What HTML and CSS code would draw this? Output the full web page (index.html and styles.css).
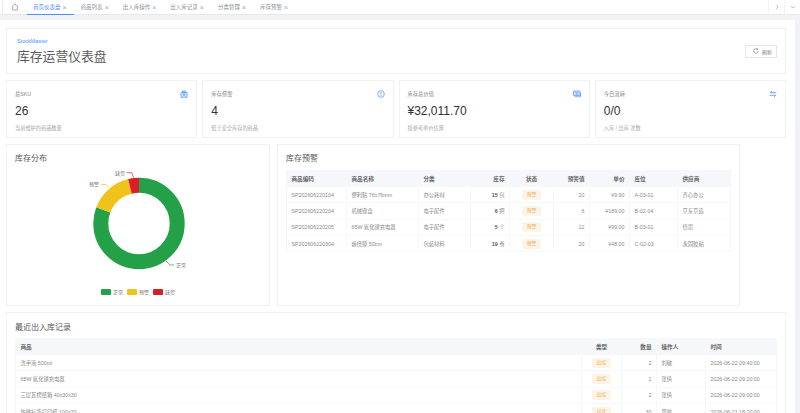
FILE: index.html
```html
<!DOCTYPE html>
<html>
<head>
    <title>库存运营仪表盘</title>
    <meta charset="UTF-8">
    <link rel="stylesheet" href="styles.css">
</head>
<body>
    <div class="tabbar">
        <div class="tab-edge"></div>
        <div class="tab-home">
            <svg width="8" height="8" viewBox="0 0 16 16" fill="none" stroke="#8a8f99" stroke-width="1.4"><path d="M1.500 8 8 2l6.500 6M3.500 7v7h9V7"/></svg>
        </div>
        <div class="tab active">首页仪表盘 <span class="tab-close">×</span></div>
        <div class="tab">商品列表 <span class="tab-close">×</span></div>
        <div class="tab">出入库操作 <span class="tab-close">×</span></div>
        <div class="tab">出入库记录 <span class="tab-close">×</span></div>
        <div class="tab">分类管理 <span class="tab-close">×</span></div>
        <div class="tab">库存预警 <span class="tab-close">×</span></div>
        <div class="tab-tools">
            <div class="tab-tool"><svg width="6" height="6" viewBox="0 0 8 8" fill="none" stroke="#a8acb3"><path d="m2.500 1 3 3-3 3"/></svg></div>
            <div class="tab-tool"><svg width="6" height="6" viewBox="0 0 8 8" fill="none" stroke="#a8acb3"><path d="m1 2.500 3 3 3-3"/></svg></div>
        </div>
    </div>

    <div class="page">
        <div class="content">
            <div class="card hero">
                <div>
                    <div class="brand">StockMaster</div>
                    <h1>库存运营仪表盘</h1>
                </div>
                <button class="refresh-btn">
                    <svg width="6" height="6" viewBox="0 0 12 12" fill="none" stroke="#666" stroke-width="1.2"><path d="M10.500 6A4.500 4.500 0 1 1 9 2.600M9.500 .8v2.400H7"/></svg>
                    刷新
                </button>
            </div>

            <div class="stats">
                <div class="card stat">
                    <div class="stat-head">
                        <span>总SKU</span>
                        <svg class="stat-icon" viewBox="0 0 16 16" fill="none" stroke="#4d8dff" stroke-width="1.500"><path d="M2 5h12v9.500H2zM5 5V2h6v3" fill="#dbe8ff"/><path d="M5.500 8.500 8 11l2.500-2.500M8 5v6" stroke-width="1.600"/></svg>
                    </div>
                    <div class="stat-value">26</div>
                    <div class="stat-note">当前维护的商品数量</div>
                </div>
                <div class="card stat">
                    <div class="stat-head">
                        <span>库存预警</span>
                        <svg class="stat-icon" viewBox="0 0 16 16" fill="none" stroke="#4d8dff" stroke-width="1.400"><circle cx="8" cy="8" r="6.600"/><path d="M8 4v5M8 10.500v1.600" stroke-width="1.600"/></svg>
                    </div>
                    <div class="stat-value">4</div>
                    <div class="stat-note">低于安全库存的商品</div>
                </div>
                <div class="card stat">
                    <div class="stat-head">
                        <span>库存总价值</span>
                        <svg class="stat-icon" viewBox="0 0 16 16" fill="none" stroke="#4d8dff" stroke-width="1.400"><rect x="1" y="2" width="13" height="9" rx="1" fill="#cfe0ff"/><path d="M5 4.500 7.500 7 10 4.500M7.500 7v2.500M3 13.500h12V5"/></svg>
                    </div>
                    <div class="stat-value">¥32,011.70</div>
                    <div class="stat-note">按参考单价估算</div>
                </div>
                <div class="card stat">
                    <div class="stat-head">
                        <span>今日流转</span>
                        <svg class="stat-icon" viewBox="0 0 16 16" fill="none" stroke="#4d8dff" stroke-width="1.600"><path d="M14.500 5.500h-12L6 2M1.500 10.500h12L10 14"/></svg>
                    </div>
                    <div class="stat-value">0/0</div>
                    <div class="stat-note">入库 / 出库 次数</div>
                </div>
            </div>

            <div class="middle">
                <div class="card panel chart-panel">
                    <h2>库存分布</h2>
                    <svg class="donut" width="262" height="118" viewBox="0 0 262 118">
                        <g fill="none" stroke-width="15" transform="rotate(-90 132 57.500)">
                            <circle cx="132" cy="57.500" r="38.200" stroke="#24a148" pathLength="360" stroke-dasharray="290.800 360"/>
                            <circle cx="132" cy="57.500" r="38.200" stroke="#f1c21b" pathLength="360" stroke-dasharray="55.400 360" stroke-dashoffset="-290.800"/>
                            <circle cx="132" cy="57.500" r="38.200" stroke="#da1e28" pathLength="360" stroke-dasharray="13.800 360" stroke-dashoffset="-346.200"/>
                        </g>
                        <g fill="none" stroke-width=".7">
                            <path d="M159 95l4 4h4" stroke="#24a148"/>
                            <path d="M94 18.500h5l2 3" stroke="#f1c21b"/>
                            <path d="M119.700 6.700h5l2 5" stroke="#da1e28"/>
                        </g>
                        <g class="donut-label">
                            <text x="169" y="101.300">正常</text>
                            <text x="82" y="20.300">预警</text>
                            <text x="108" y="8.700">缺货</text>
                        </g>
                    </svg>
                    <div class="legend">
                        <span class="legend-item"><i class="swatch green"></i>正常</span>
                        <span class="legend-item"><i class="swatch yellow"></i>预警</span>
                        <span class="legend-item"><i class="swatch red"></i>缺货</span>
                    </div>
                </div>

                <div class="card panel warn-panel">
                    <h2>库存预警</h2>
                    <table class="warn-table">
                        <thead>
                            <tr>
                                <th class="w-code">商品编码</th>
                                <th class="w-name">商品名称</th>
                                <th class="w-cat">分类</th>
                                <th class="w-stock num">库存</th>
                                <th class="w-state mid">状态</th>
                                <th class="w-limit num">预警值</th>
                                <th class="w-price num">单价</th>
                                <th class="w-loc">库位</th>
                                <th>供应商</th>
                            </tr>
                        </thead>
                        <tbody>
                            <tr>
                                <td>SP202606220104</td><td>便利贴 76x76mm</td><td>办公耗材</td>
                                <td class="num"><b>15</b> 包</td><td class="mid"><span class="tag">预警</span></td>
                                <td class="num">20</td><td class="num">¥9.90</td><td>A-03-01</td><td>齐心办公</td>
                            </tr>
                            <tr>
                                <td>SP202606220204</td><td>机械键盘</td><td>电子配件</td>
                                <td class="num"><b>6</b> 把</td><td class="mid"><span class="tag">预警</span></td>
                                <td class="num">6</td><td class="num">¥189.00</td><td>B-02-04</td><td>京东京造</td>
                            </tr>
                            <tr>
                                <td>SP202606220205</td><td>65W 氮化镓充电器</td><td>电子配件</td>
                                <td class="num"><b>5</b> 个</td><td class="mid"><span class="tag">预警</span></td>
                                <td class="num">12</td><td class="num">¥99.00</td><td>B-03-01</td><td>倍思</td>
                            </tr>
                            <tr>
                                <td>SP202606220304</td><td>缠绕膜 50cm</td><td>包装材料</td>
                                <td class="num"><b>19</b> 卷</td><td class="mid"><span class="tag">预警</span></td>
                                <td class="num">20</td><td class="num">¥48.00</td><td>C-02-03</td><td>永固胶粘</td>
                            </tr>
                        </tbody>
                    </table>
                </div>
            </div>

            <div class="card panel recent-panel">
                <h2>最近出入库记录</h2>
                <table class="recent-table">
                    <thead>
                        <tr>
                            <th>商品</th>
                            <th class="r-type mid">类型</th>
                            <th class="r-qty num">数量</th>
                            <th class="r-user">操作人</th>
                            <th class="r-time">时间</th>
                        </tr>
                    </thead>
                    <tbody>
                        <tr><td>洗手液 500ml</td><td class="mid"><span class="tag">出库</span></td><td class="num">2</td><td>刘敏</td><td>2026-06-22 09:40:00</td></tr>
                        <tr><td>65W 氮化镓充电器</td><td class="mid"><span class="tag">出库</span></td><td class="num">1</td><td>张倩</td><td>2026-06-22 09:20:00</td></tr>
                        <tr><td>三层瓦楞纸箱 40x30x30</td><td class="mid"><span class="tag">出库</span></td><td class="num">2</td><td>张倩</td><td>2026-06-22 09:00:00</td></tr>
                        <tr><td>热敏标签打印纸 100x70</td><td class="mid"><span class="tag">出库</span></td><td class="num">30</td><td>周航</td><td>2026-06-21 18:20:00</td></tr>
                    </tbody>
                </table>
            </div>
        </div>
    </div>
</body>
</html>
```

FILE: styles.css
```css
html, body {
    margin: 0;
    height: 413px;
    overflow: hidden;
    background-color: #fff;
    font-family: "Liberation Sans", "Noto Sans CJK SC", sans-serif;
    color: #606266;
}

/* Tabs */
.tabbar {
    display: flex;
    align-items: stretch;
    height: 14px;
    border-bottom: 1px solid #e6e8ee;
    font-size: 5.500px;
    background-color: #fff;
}

.tab-edge {
    width: 2px;
    border-right: 1px solid #eee;
}

.tab-home {
    display: flex;
    align-items: center;
    justify-content: center;
    width: 24px;
}

.tab {
    display: flex;
    align-items: center;
    gap: 2px;
    padding: 0 7px;
    color: #8e9197;
    white-space: nowrap;
}

.tab.active {
    padding: 0 7px 0 6px;
    color: #4d8dff;
    border-bottom: 1px solid #4d8dff;
    margin-bottom: -1px;
}

.tab-close {
    font-size: 7px;
    color: #a3a6ab;
    line-height: 1;
}

.tab-tools {
    display: flex;
    margin-left: auto;
}

.tab-tool {
    display: flex;
    align-items: center;
    justify-content: center;
    width: 15px;
    border-left: 1px solid #f2f3f5;
}

/* Page */
.page {
    height: 398px;
    padding-top: 5px;
    box-sizing: border-box;
    background-color: #f2f3f7;
}

.content {
    display: flex;
    flex-direction: column;
    gap: 6px;
    width: 795px;
    height: 393px;
    box-sizing: border-box;
    padding: 8px 9px 0 6px;
    background-color: #fff;
    border-radius: 0 2px 0 0;
    overflow: hidden;
}

.content > * {
    flex: none;
}

.card {
    box-sizing: border-box;
    background-color: #fff;
    border: 1px solid #f0f1f3;
}

.hero {
    display: flex;
    align-items: center;
    justify-content: space-between;
    height: 46px;
    padding: 0 8px 0 10px;
}

.brand {
    font-size: 5.500px;
    color: #4d8dff;
    margin-bottom: 2px;
}

h1 {
    margin: 0;
    font-size: 12.800px;
    font-weight: 400;
    color: #5a5a5a;
}

.refresh-btn {
    display: flex;
    align-items: center;
    gap: 3px;
    width: 32px;
    height: 13px;
    padding: 0 0 0 7px;
    font: inherit;
    font-size: 5px;
    color: #777;
    background-color: #fff;
    border: 1px solid #e6e7ea;
}

/* Stat cards */
.stats {
    display: grid;
    grid-template-columns: repeat(4, 1fr);
    gap: 5px;
    height: 58px;
}

.stat {
    padding: 9px 8px 0;
}

.stat-head {
    display: flex;
    align-items: center;
    justify-content: space-between;
    height: 8px;
    font-size: 5.300px;
    color: #888;
}

.stat-icon {
    width: 8px;
    height: 8px;
}

.stat-value {
    margin-top: 6px;
    font-size: 12px;
    line-height: 14px;
    color: #303133;
}

.stat-note {
    margin-top: 6px;
    font-size: 5.200px;
    color: #a5a5a5;
}

/* Panels */
.middle {
    display: flex;
    gap: 7px;
    height: 162px;
}

.panel h2 {
    margin: 0;
    font-size: 8px;
    font-weight: 400;
    color: #555;
    line-height: 10px;
}

.chart-panel {
    width: 264px;
    padding-top: 9px;
}

.chart-panel h2 {
    padding-left: 8px;
}

.donut {
    display: block;
    margin-top: 2px;
}

.donut-label text {
    font-size: 5px;
    fill: #777;
}

.legend {
    display: flex;
    justify-content: center;
    gap: 4px;
    margin-top: 4px;
    font-size: 5px;
    color: #777;
}

.legend-item {
    display: flex;
    align-items: center;
    gap: 2px;
}

.swatch {
    width: 10px;
    height: 6px;
    border-radius: 1px;
}

.green { background-color: #24a148; }
.yellow { background-color: #f1c21b; }
.red { background-color: #da1e28; }

.warn-panel {
    width: 463px;
    padding: 9px 8px 0;
}

.recent-panel {
    height: 120px;
    padding: 10px 8px 0;
}

/* Tables */
table {
    width: 100%;
    table-layout: fixed;
    border-collapse: collapse;
    font-size: 5.300px;
    color: #8a8a8a;
}

.warn-table {
    margin-top: 6px;
}

.recent-table {
    margin-top: 5px;
}

th, td {
    height: 16.300px;
    box-sizing: border-box;
    padding: 0 4.500px;
    text-align: left;
    border: 1px solid #f6f7f9;
    white-space: nowrap;
    overflow: hidden;
}

th {
    height: 16px;
    font-size: 5.600px;
    color: #666;
    background-color: #f5f7fa;
}

td b {
    color: #555;
}

.num { text-align: right; }
.mid { text-align: center; }

.w-code { width: 60px; }
.w-name { width: 72px; }
.w-cat { width: 52px; }
.w-stock { width: 39px; }
.w-state { width: 44px; }
.w-limit { width: 36px; }
.w-price { width: 40px; }
.w-loc { width: 48px; }

.r-type { width: 40px; }
.r-qty { width: 35px; }
.r-user { width: 49px; }
.r-time { width: 71px; }

.tag {
    display: inline-block;
    padding: 0 4px;
    line-height: 8px;
    font-size: 4.800px;
    color: #e9ad58;
    background-color: #fdf3e6;
    border: 1px solid #fdf3e6;
    border-radius: 2px;
}
```
